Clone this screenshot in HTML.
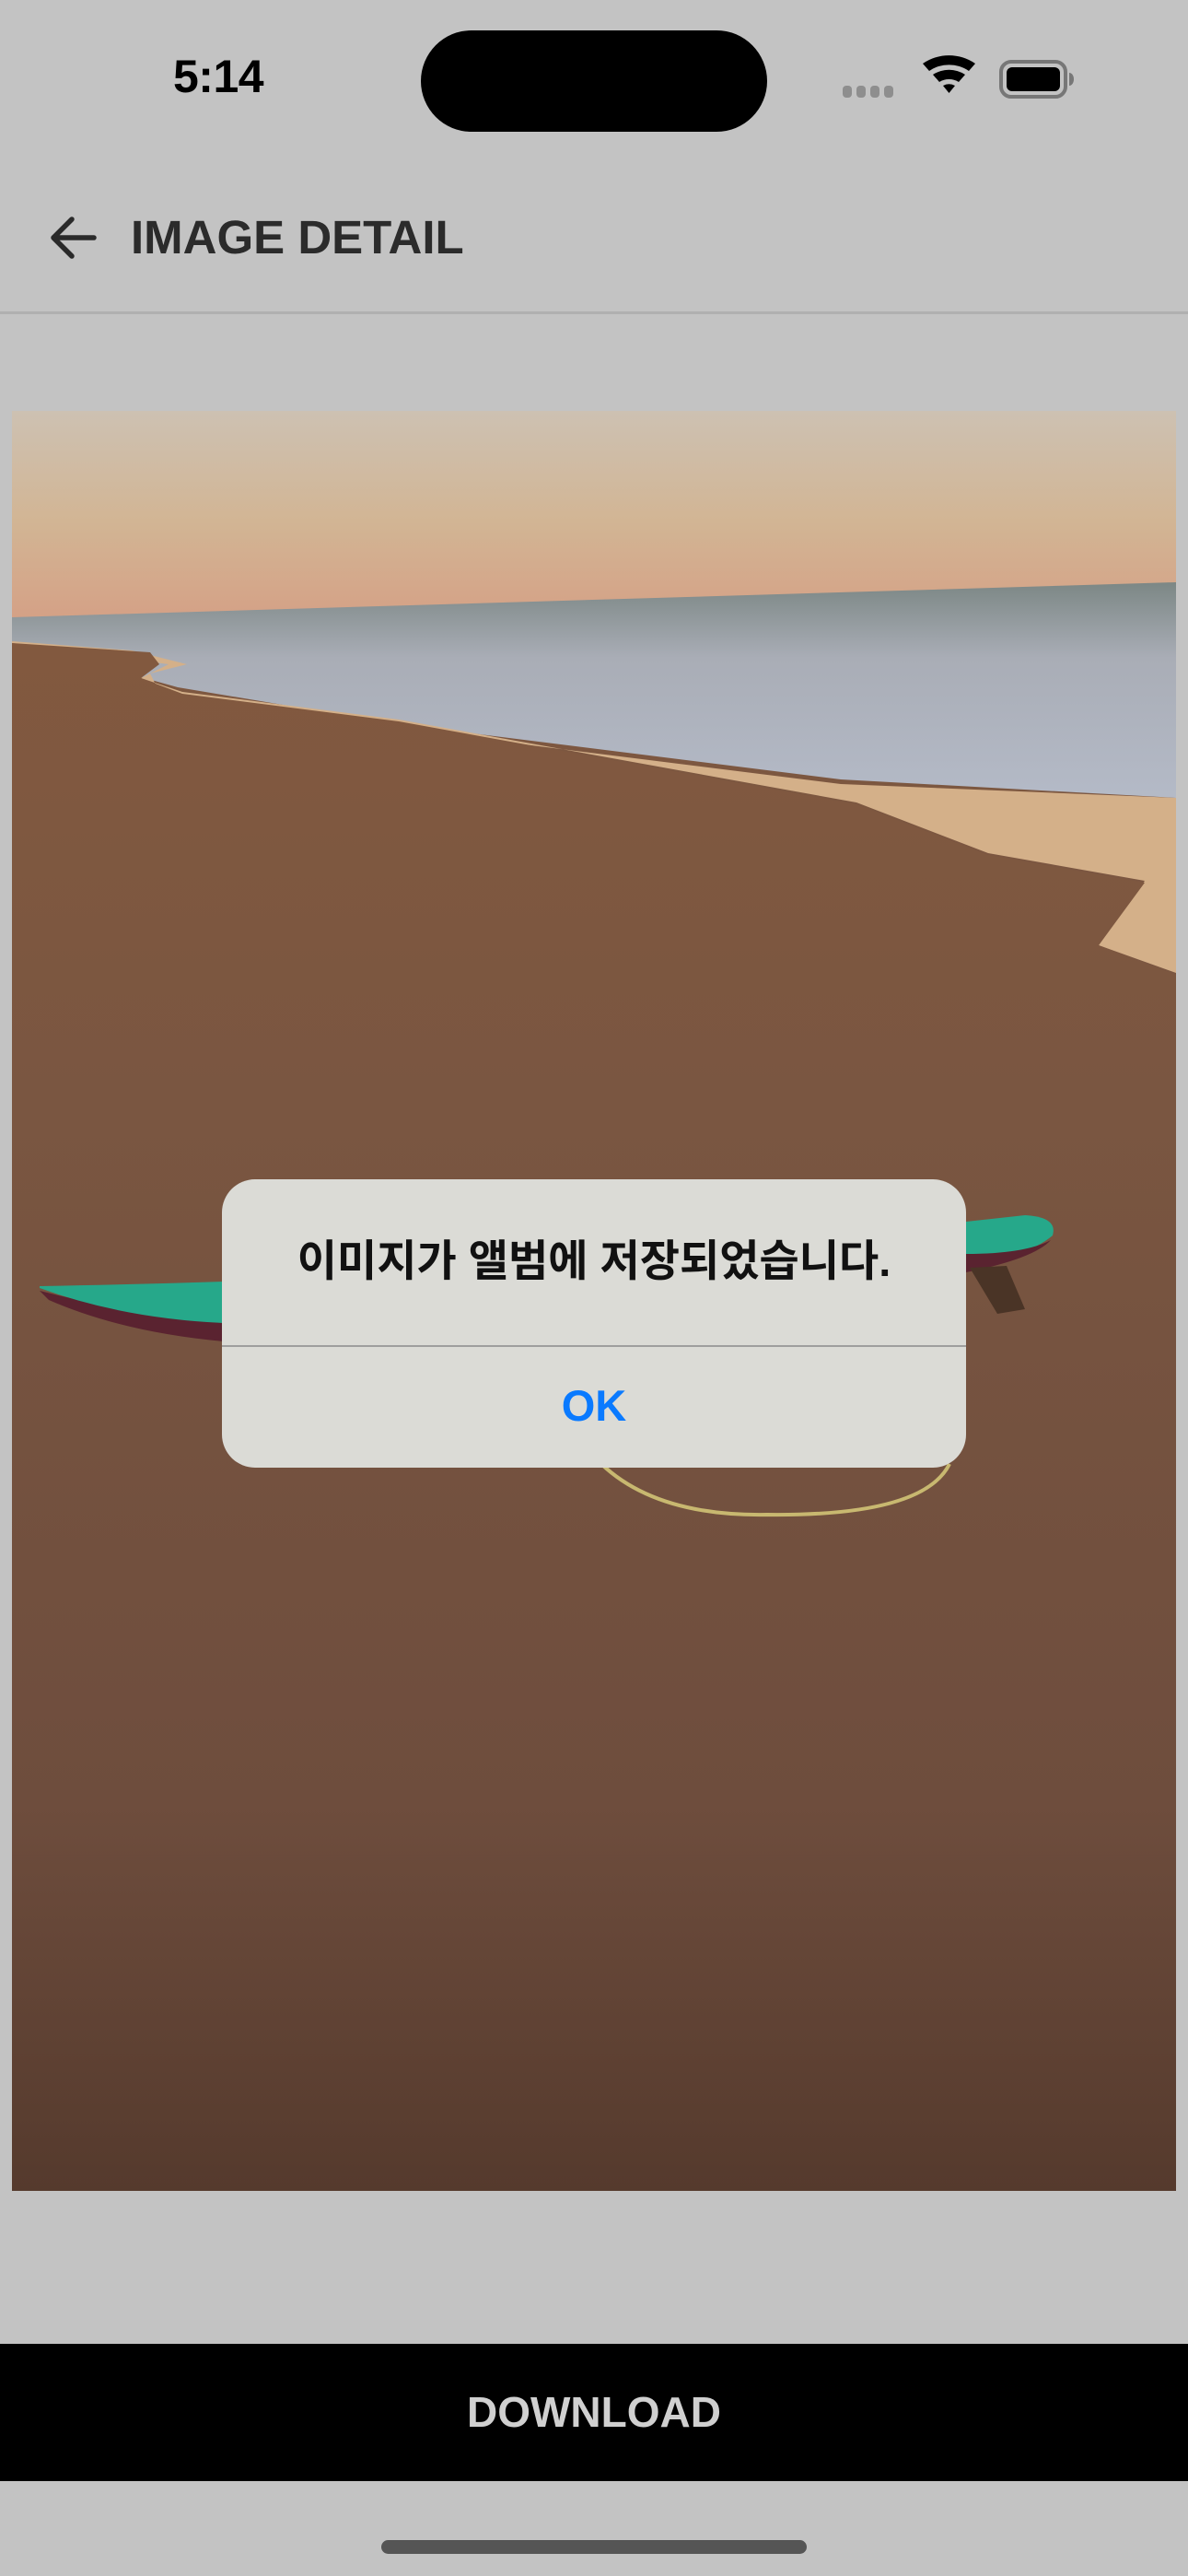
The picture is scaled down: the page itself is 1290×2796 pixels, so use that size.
<!DOCTYPE html>
<html><head><meta charset="utf-8"><style>
*{margin:0;padding:0;box-sizing:border-box}
body{width:1290px;height:2796px;background:#c3c3c3;position:relative;overflow:hidden;font-family:"Liberation Sans","Noto Sans CJK KR",sans-serif}
.abs{position:absolute}
</style></head><body>
<div class="abs" style="left:188px;top:54px;font-size:50px;font-weight:bold;color:#000;letter-spacing:-0.5px">5:14</div>
<div class="abs" style="left:457px;top:33px;width:376px;height:110px;background:#000;border-radius:55px"></div>
<svg class="abs" style="left:910px;top:55px" width="270" height="60" viewBox="0 0 270 60">
<g fill="#8e8e8e"><rect x="5" y="38" width="10" height="13" rx="4"/><rect x="20" y="38" width="10" height="13" rx="4"/><rect x="35" y="38" width="10" height="13" rx="4"/><rect x="50" y="38" width="10" height="13" rx="4"/></g>
<path d="M93 14 A50 50 0 0 1 150 14 L143 22 A38 38 0 0 0 100 22Z M104 26 A32 32 0 0 1 139 26 L132 34 A20 20 0 0 0 111 34Z M115 38 A14 14 0 0 1 128 38 L121.5 46Z" fill="#000" transform="translate(-1,0)"/>
<rect x="177" y="12" width="70" height="38" rx="11" fill="none" stroke="#777" stroke-width="4"/>
<rect x="183" y="18" width="58" height="26" rx="6" fill="#000"/>
<path d="M251 24 a5 7 0 0 1 0 14z" fill="#777"/>
</svg>
<svg class="abs" style="left:50px;top:230px" width="60" height="60" viewBox="0 0 60 60"><path d="M52 28 H10 M28 8 L8 28 L28 48" stroke="#2a2a2a" stroke-width="5.5" fill="none" stroke-linecap="round" stroke-linejoin="round"/></svg>
<div class="abs" style="left:142px;top:228px;font-size:51px;font-weight:bold;color:#2b2b2b">IMAGE DETAIL</div>
<div class="abs" style="left:0;top:338px;width:1290px;height:3px;background:#b0b0b0"></div>

<svg class="abs" style="left:13px;top:446px" width="1264" height="1932" viewBox="0 0 1264 1932" preserveAspectRatio="none">
<defs>
<linearGradient id="sky" x1="0" y1="0" x2="0" y2="1"><stop offset="0" stop-color="#cdc1b2"/><stop offset="0.5" stop-color="#d2b594"/><stop offset="1" stop-color="#d59e84"/></linearGradient>
<linearGradient id="sea" x1="0" y1="0" x2="0" y2="1"><stop offset="0" stop-color="#7c8785"/><stop offset="0.35" stop-color="#a9adb6"/><stop offset="1" stop-color="#b4bac7"/></linearGradient>
<linearGradient id="sand" x1="0" y1="0" x2="0" y2="1"><stop offset="0" stop-color="#82593f"/><stop offset="0.3" stop-color="#7a5641"/><stop offset="0.75" stop-color="#6e4d3d"/><stop offset="1" stop-color="#553a2d"/></linearGradient>
</defs>
<rect width="1264" height="1932" fill="url(#sand)"/>
<rect width="1264" height="240" fill="url(#sky)"/>
<path d="M0 224 L1264 186 L1264 420 L900 400 L420 340 L180 300 L0 250Z" fill="url(#sea)"/>
<path d="M0 250 L130 260 L190 275 L150 285 L160 305 L420 345 L900 405 L1264 420 L1264 610 L1180 580 L1230 510 L1060 480 L917 425 L420 335 L185 305 L140 290 L170 275 L0 252Z" fill="#d4b089"/>
<path d="M0 252 L150 262 L160 275 L140 290 L185 307 L420 337 L917 427 L1060 482 L1230 512 L1180 580 L1264 612 L1264 1932 L0 1932Z" fill="url(#sand)"/>
<path d="M30 955 Q150 985 230 990 L230 1010 Q120 1000 40 965 Z" fill="#5a2330"/>
<path d="M30 950 Q140 948 230 945 L230 990 Q120 985 30 952Z" fill="#26a88a"/>
<path d="M1036 880 L1100 873 Q1136 875 1130 895 Q1100 920 1036 925Z" fill="#26a88a"/>
<path d="M1036 915 Q1100 915 1128 900 Q1110 920 1036 935Z" fill="#5a2330"/>
<path d="M1040 930 L1080 928 L1100 975 L1070 980Z" fill="#4a3426"/>
<path d="M640 1143 Q700 1200 820 1198 Q990 1200 1018 1143" fill="none" stroke="#c8b870" stroke-width="4"/>
</svg>

<div class="abs" style="left:241px;top:1280px;width:808px;height:313px;background:#dbdbd6;border-radius:36px;overflow:hidden">
<div style="height:180px;line-height:178px;text-align:center;font-size:47px;font-weight:bold;color:#111">이미지가 앨범에 저장되었습니다.</div>
<div style="height:2px;background:#9e9e9e"></div>
<div style="height:131px;line-height:128px;text-align:center;font-size:47px;font-weight:bold;color:#0a7aff">OK</div>
</div>

<div class="abs" style="left:0;top:2544px;width:1290px;height:149px;background:#000;color:#d0d0d0;font-size:46px;font-weight:bold;text-align:center;line-height:149px">DOWNLOAD</div>
<div class="abs" style="left:414px;top:2757px;width:462px;height:15px;background:#555;border-radius:8px"></div>
</body></html>
